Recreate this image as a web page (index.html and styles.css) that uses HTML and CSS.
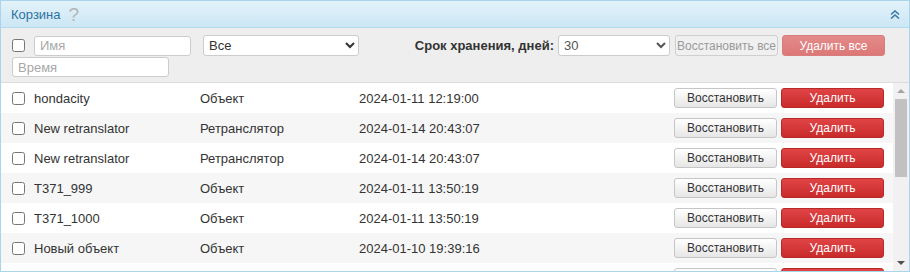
FILE: index.html
```html
<!DOCTYPE html>
<html lang="ru">
<head>
<meta charset="utf-8">
<title>Корзина</title>
<link rel="stylesheet" href="styles.css">
</head>
<body>
<div class="panel">
  <div class="panel-head">
    <span class="title">Корзина</span>
    <span class="help">?</span>
    <span class="collapse">
      <svg width="10" height="9" viewBox="0 0 10 9"><path d="M1 4.5 L5 1 L9 4.5 M1 8.5 L5 5 L9 8.5" fill="none" stroke="#3a7aa8" stroke-width="1.6"/></svg>
    </span>
  </div>
  <div class="filters">
    <div class="frow">
      <input type="checkbox" class="cb">
      <input type="text" class="field name-field" placeholder="Имя">
      <select class="sel type-sel"><option>Все</option></select>
      <div class="right-group">
        <span class="flabel">Срок хранения, дней:</span>
        <select class="sel days-sel"><option>30</option></select>
        <button class="btn btn-restore-all" disabled>Восстановить все</button>
        <button class="btn btn-delete-all">Удалить все</button>
      </div>
    </div>
    <div class="frow2">
      <input type="text" class="field time-field" placeholder="Время">
    </div>
  </div>
  <div class="list-wrap">
    <div class="rows">
      <div class="row"><input type="checkbox" class="cb"><span class="c-name">hondacity</span><span class="c-type">Объект</span><span class="c-date">2024-01-11 12:19:00</span><button class="btn btn-restore">Восстановить</button><button class="btn btn-delete">Удалить</button></div>
      <div class="row"><input type="checkbox" class="cb"><span class="c-name">New retranslator</span><span class="c-type">Ретранслятор</span><span class="c-date">2024-01-14 20:43:07</span><button class="btn btn-restore">Восстановить</button><button class="btn btn-delete">Удалить</button></div>
      <div class="row"><input type="checkbox" class="cb"><span class="c-name">New retranslator</span><span class="c-type">Ретранслятор</span><span class="c-date">2024-01-14 20:43:07</span><button class="btn btn-restore">Восстановить</button><button class="btn btn-delete">Удалить</button></div>
      <div class="row"><input type="checkbox" class="cb"><span class="c-name">T371_999</span><span class="c-type">Объект</span><span class="c-date">2024-01-11 13:50:19</span><button class="btn btn-restore">Восстановить</button><button class="btn btn-delete">Удалить</button></div>
      <div class="row"><input type="checkbox" class="cb"><span class="c-name">T371_1000</span><span class="c-type">Объект</span><span class="c-date">2024-01-11 13:50:19</span><button class="btn btn-restore">Восстановить</button><button class="btn btn-delete">Удалить</button></div>
      <div class="row"><input type="checkbox" class="cb"><span class="c-name">Новый объект</span><span class="c-type">Объект</span><span class="c-date">2024-01-10 19:39:16</span><button class="btn btn-restore">Восстановить</button><button class="btn btn-delete">Удалить</button></div>
      <div class="row"><input type="checkbox" class="cb"><span class="c-name">Объект</span><span class="c-type">Объект</span><span class="c-date">2024-01-10 19:39:16</span><button class="btn btn-restore">Восстановить</button><button class="btn btn-delete">Удалить</button></div>
    </div>
    <div class="scrollbar">
      <div class="sb-arrow sb-up"></div>
      <div class="sb-track"><div class="sb-thumb"></div></div>
      <div class="sb-arrow sb-down"></div>
    </div>
  </div>
</div>
</body>
</html>
```
FILE: styles.css
```css
* { box-sizing: border-box; }
html, body { margin: 0; padding: 0; background: #fff; }
body { font-family: "Liberation Sans", Arial, sans-serif; font-size: 13px; color: #333; }

.panel {
  width: 910px;
  height: 272px;
  border: 1px solid #a9d5ea;
  overflow: hidden;
  display: flex;
  flex-direction: column;
}

.panel-head {
  height: 27px;
  flex: none;
  display: flex;
  align-items: center;
  padding-left: 10px;
  padding-right: 9px;
  background: linear-gradient(#e3f2fa, #cce7f5);
  border-bottom: 1px solid #b3dbef;
}
.title { color: #2d72a3; font-size: 13px; }
.help { color: #b5b5b5; font-size: 19px; margin-left: 8px; line-height: 1; }
.collapse { margin-left: auto; display: flex; align-items: center; }

.filters {
  flex: none;
  height: 55px;
  background: #eeeeee;
  border-bottom: 1px solid #dcdcdc;
  padding: 7px 24px 0 11px;
}
.frow { display: flex; align-items: center; height: 21px; }
.frow2 { display: flex; margin-top: 1px; }

.cb {
  margin: 0;
  width: 13px;
  height: 13px;
  flex: none;
}

.field {
  height: 20px;
  border: 1px solid #cccccc;
  border-radius: 3px;
  background: #fff;
  font-family: "Liberation Sans", Arial, sans-serif;
  font-size: 13px;
  color: #333;
  padding: 0 5px;
  outline: none;
}
.field::placeholder { color: #a8a8a8; }
.name-field { width: 157px; margin-left: 9px; }
.time-field { width: 157px; }

.sel {
  height: 21px;
  border: 1px solid #cccccc;
  border-radius: 3px;
  background: #fff;
  font-family: "Liberation Sans", Arial, sans-serif;
  font-size: 13px;
  color: #333;
  padding: 0 1px;
}
.type-sel { width: 156px; margin-left: 12px; }
.days-sel { width: 112px; margin-left: 4px; color: #555; }

.right-group { margin-left: auto; display: flex; align-items: center; }
.flabel { font-weight: bold; font-size: 13px; color: #333; }

.btn {
  font-family: "Liberation Sans", Arial, sans-serif;
  font-size: 12px;
  height: 20px;
  border-radius: 3px;
  padding: 0;
  width: 103px;
  cursor: pointer;
}
.btn-restore-all {
  margin-left: 5px;
  height: 21px;
  background: #f0f0f0;
  border: 1px solid #cfcfcf;
  color: #9a9a9a;
}
.btn-delete-all {
  margin-left: 4px;
  height: 21px;
  background: linear-gradient(#e48a8a, #dc7777);
  border: 1px solid #d87d7d;
  color: #fff;
}

.list-wrap { flex: 1; display: flex; min-height: 0; }
.rows { flex: 1; overflow: hidden; }
.row {
  height: 30px;
  display: flex;
  align-items: center;
  padding-left: 11px;
  background: #fff;
}
.row:nth-child(even) { background: #f6f6f6; }
.c-name { width: 166px; margin-left: 9px; flex: none; }
.c-type { width: 159px; flex: none; }
.c-date { flex: 1; }
.btn-restore {
  width: 103px;
  background: linear-gradient(#ffffff, #e6e6e6);
  border: 1px solid #c6c6c6;
  color: #333;
}
.btn-delete {
  width: 103px;
  margin-left: 4px;
  margin-right: 9px;
  background: linear-gradient(#e04444, #c92b2b);
  border: 1px solid #b82828;
  color: #fff;
}

.scrollbar {
  width: 16px;
  flex: none;
  background: #f1f1f1;
  display: flex;
  flex-direction: column;
}
.sb-arrow { height: 16px; flex: none; display: flex; align-items: center; justify-content: center; }
.sb-up::before {
  content: "";
  border-left: 4px solid transparent;
  border-right: 4px solid transparent;
  border-bottom: 4px solid #a3a3a3;
}
.sb-down::before {
  content: "";
  border-left: 4px solid transparent;
  border-right: 4px solid transparent;
  border-top: 4px solid #505050;
}
.sb-track { flex: 1; padding: 0 2px; }
.sb-thumb { height: 78px; background: #c1c1c1; }
```
